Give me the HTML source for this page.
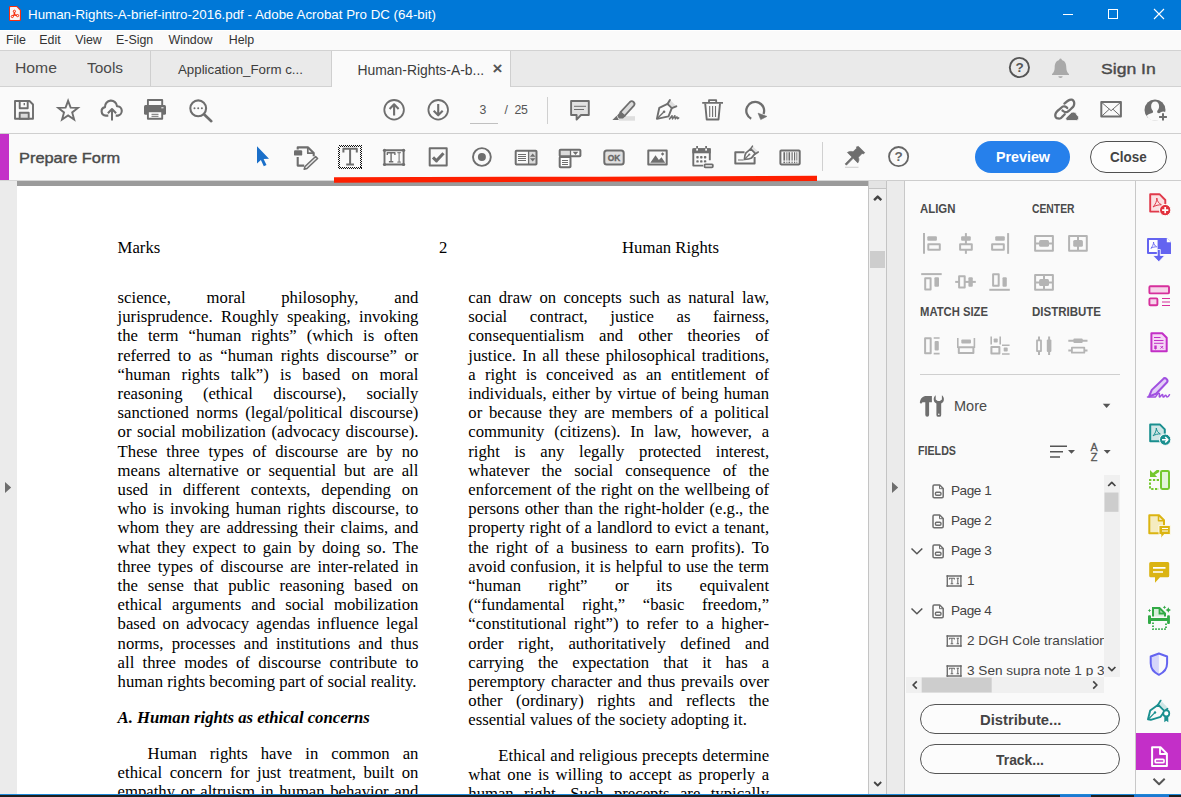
<!DOCTYPE html>
<html>
<head>
<meta charset="utf-8">
<title>Human-Rights-A-brief-intro-2016.pdf - Adobe Acrobat Pro DC (64-bit)</title>
<style>
*{box-sizing:border-box;margin:0;padding:0}
html,body{width:1181px;height:797px;overflow:hidden;background:#fff}
body{position:relative;font-family:"Liberation Sans",sans-serif;color:#4b4b4b}
.abs{position:absolute}
.t{position:absolute;white-space:nowrap;line-height:1;z-index:2}
svg{position:absolute;overflow:visible}
/* title bar */
#title{left:0;top:0;width:1181px;height:30px;background:#0078d7}
#menu{left:0;top:30px;width:1181px;height:20px;background:#fafafa;border-top:1px solid #fff}
#tabs{left:0;top:50px;width:1181px;height:37px;background:#eaeaea;border-top:1px solid #d2d2d2;border-bottom:1px solid #d2d2d2}
#tools{left:0;top:87px;width:1181px;height:47px;background:#fafafa;border-bottom:1px solid #cfcfcf}
#form{left:0;top:134px;width:1181px;height:47px;background:#fafafa}
#docbg{left:0;top:180px;width:905px;height:617px;background:#ebebeb;border-top:1px solid #d6d6d6}
#page{left:17px;top:186px;width:852px;height:611px;background:#fff}
#pshadow{left:17px;top:181px;width:852px;height:5.300px;background:#9b9b9b}
.doc{font-family:"Liberation Serif",serif;font-size:16.7px;color:#000}
.ln{position:absolute;white-space:nowrap;height:19.2px;line-height:19.2px;text-align:justify;text-align-last:justify}
.ln.l{text-align-last:left}
.ln.r{text-align-last:right}
.m{top:33px;font-size:12.4px;line-height:15px;color:#333;text-align:center}
.h{font-size:12px;line-height:14px;font-weight:bold;color:#4a4a4a;transform-origin:0 50%}
.f{font-size:13.6px;line-height:16px;color:#444}
.btn{width:200px;height:30px;border-radius:15px;border:1.300px solid #555;background:#fcfcfc}
.sb{-webkit-text-stroke:.4px currentColor}
</style>
</head>
<body>
<div id="title" class="abs"></div>
<div id="menu" class="abs"></div>
<div id="tabs" class="abs"></div>
<div id="tools" class="abs"></div>
<div id="form" class="abs"></div>
<div id="docbg" class="abs"></div>
<div id="pshadow" class="abs"></div>
<div id="page" class="abs"></div>
<div class="doc">
<div class="ln " style="left:117.6px;top:288.0px;width:300.8px">science, moral philosophy, and</div>
<div class="ln " style="left:117.6px;top:307.2px;width:300.8px">jurisprudence. Roughly speaking, invoking</div>
<div class="ln " style="left:117.6px;top:326.4px;width:300.8px">the term “human rights” (which is often</div>
<div class="ln " style="left:117.6px;top:345.6px;width:300.8px">referred to as “human rights discourse” or</div>
<div class="ln " style="left:117.6px;top:364.8px;width:300.8px">“human rights talk”) is based on moral</div>
<div class="ln " style="left:117.6px;top:384.0px;width:300.8px">reasoning (ethical discourse), socially</div>
<div class="ln " style="left:117.6px;top:403.2px;width:300.8px">sanctioned norms (legal/political discourse)</div>
<div class="ln " style="left:117.6px;top:422.4px;width:300.8px">or social mobilization (advocacy discourse).</div>
<div class="ln " style="left:117.6px;top:441.6px;width:300.8px">These three types of discourse are by no</div>
<div class="ln " style="left:117.6px;top:460.8px;width:300.8px">means alternative or sequential but are all</div>
<div class="ln " style="left:117.6px;top:480.0px;width:300.8px">used in different contexts, depending on</div>
<div class="ln " style="left:117.6px;top:499.2px;width:300.8px">who is invoking human rights discourse, to</div>
<div class="ln " style="left:117.6px;top:518.4px;width:300.8px">whom they are addressing their claims, and</div>
<div class="ln " style="left:117.6px;top:537.6px;width:300.8px">what they expect to gain by doing so. The</div>
<div class="ln " style="left:117.6px;top:556.8px;width:300.8px">three types of discourse are inter-related in</div>
<div class="ln " style="left:117.6px;top:576.0px;width:300.8px">the sense that public reasoning based on</div>
<div class="ln " style="left:117.6px;top:595.2px;width:300.8px">ethical arguments and social mobilization</div>
<div class="ln " style="left:117.6px;top:614.4px;width:300.8px">based on advocacy agendas influence legal</div>
<div class="ln " style="left:117.6px;top:633.6px;width:300.8px">norms, processes and institutions and thus</div>
<div class="ln " style="left:117.6px;top:652.8px;width:300.8px">all three modes of discourse contribute to</div>
<div class="ln l" style="left:117.6px;top:672.0px;width:300.8px">human rights becoming part of social reality.</div>
<div class="ln " style="left:468.3px;top:288.0px;width:300.8px">can draw on concepts such as natural law,</div>
<div class="ln " style="left:468.3px;top:307.2px;width:300.8px">social contract, justice as fairness,</div>
<div class="ln " style="left:468.3px;top:326.4px;width:300.8px">consequentialism and other theories of</div>
<div class="ln " style="left:468.3px;top:345.6px;width:300.8px">justice. In all these philosophical traditions,</div>
<div class="ln " style="left:468.3px;top:364.8px;width:300.8px">a right is conceived as an entitlement of</div>
<div class="ln " style="left:468.3px;top:384.0px;width:300.8px">individuals, either by virtue of being human</div>
<div class="ln " style="left:468.3px;top:403.2px;width:300.8px">or because they are members of a political</div>
<div class="ln " style="left:468.3px;top:422.4px;width:300.8px">community (citizens). In law, however, a</div>
<div class="ln " style="left:468.3px;top:441.6px;width:300.8px">right is any legally protected interest,</div>
<div class="ln " style="left:468.3px;top:460.8px;width:300.8px">whatever the social consequence of the</div>
<div class="ln " style="left:468.3px;top:480.0px;width:300.8px">enforcement of the right on the wellbeing of</div>
<div class="ln " style="left:468.3px;top:499.2px;width:300.8px">persons other than the right-holder (e.g., the</div>
<div class="ln " style="left:468.3px;top:518.4px;width:300.8px">property right of a landlord to evict a tenant,</div>
<div class="ln " style="left:468.3px;top:537.6px;width:300.8px">the right of a business to earn profits). To</div>
<div class="ln " style="left:468.3px;top:556.8px;width:300.8px">avoid confusion, it is helpful to use the term</div>
<div class="ln " style="left:468.3px;top:576.0px;width:300.8px">“human right” or its equivalent</div>
<div class="ln " style="left:468.3px;top:595.2px;width:300.8px">(“fundamental right,” “basic freedom,”</div>
<div class="ln " style="left:468.3px;top:614.4px;width:300.8px">“constitutional right”) to refer to a higher-</div>
<div class="ln " style="left:468.3px;top:633.6px;width:300.8px">order right, authoritatively defined and</div>
<div class="ln " style="left:468.3px;top:652.8px;width:300.8px">carrying the expectation that it has a</div>
<div class="ln " style="left:468.3px;top:672.0px;width:300.8px">peremptory character and thus prevails over</div>
<div class="ln " style="left:468.3px;top:691.2px;width:300.8px">other (ordinary) rights and reflects the</div>
<div class="ln l" style="left:468.3px;top:710.4px;width:300.8px">essential values of the society adopting it.</div>
<div class="ln l" style="left:117.6px;top:238.4px;width:60px">Marks</div>
<div class="ln l" style="left:439px;top:238.4px;width:20px">2</div>
<div class="ln l" style="left:622px;top:238.4px;width:120px">Human Rights</div>
<div class="ln l" style="left:117.6px;top:708.0px;width:300.8px"><b><i>A. Human rights as ethical concerns</i></b></div>
<div class="ln " style="left:147.6px;top:744.0px;width:270.8px">Human rights have in common an</div>
<div class="ln " style="left:117.6px;top:763.2px;width:300.8px">ethical concern for just treatment, built on</div>
<div class="ln " style="left:117.6px;top:782.4px;width:300.8px">empathy or altruism in human behavior and</div>
<div class="ln " style="left:498.3px;top:746.0px;width:270.8px">Ethical and religious precepts determine</div>
<div class="ln " style="left:468.3px;top:765.2px;width:300.8px">what one is willing to accept as properly a</div>
<div class="ln " style="left:468.3px;top:784.4px;width:300.8px">human right. Such precepts are typically</div>
</div>
<!--UI-->
<!-- title bar text -->
<div class="t" id="ttl" style="left:28px;top:7.500px;font-size:12.600px;color:#fff;line-height:15px;transform:scaleX(1.0595);transform-origin:0 50%">Human-Rights-A-brief-intro-2016.pdf - Adobe Acrobat Pro DC (64-bit)</div>
<!-- menu bar -->
<div class="t m" style="left:6px;width:19px">File</div>
<div class="t m" style="left:39px;width:22px">Edit</div>
<div class="t m" style="left:75px;width:27px">View</div>
<div class="t m" style="left:116px;width:37px">E-Sign</div>
<div class="t m" style="left:167px;width:47px">Window</div>
<div class="t m" style="left:228px;width:27px">Help</div>
<!-- tab bar -->
<div class="abs" style="left:150px;top:51px;width:1px;height:35px;background:#cfcfcf"></div>
<div class="abs" id="atab" style="left:331px;top:51px;width:180px;height:36px;background:#fafafa;border-left:1px solid #cfcfcf;border-right:1px solid #cfcfcf"></div>
<div class="t" style="left:15px;top:59.300px;font-size:14.500px;line-height:18px;color:#4a4a4a;transform:scaleX(1.085);transform-origin:0 50%">Home</div>
<div class="t" style="left:87px;top:59.300px;font-size:14.500px;line-height:18px;color:#4a4a4a;transform:scaleX(1.065);transform-origin:0 50%">Tools</div>
<div class="t" style="left:178px;top:62px;font-size:13.3px;line-height:16px;color:#3c3c3c">Application_Form c...</div>
<div class="t" style="left:357.5px;top:62px;font-size:13.9px;line-height:16px;color:#3c3c3c">Human-Rights-A-b...</div>
<div class="t sb" style="left:1101.300px;top:58.500px;font-size:15.500px;line-height:20px;color:#4a4a4a;transform:scaleX(1.135);transform-origin:0 50%">Sign In</div>
<!-- toolbar text -->
<div class="t" style="left:479.600px;top:102.500px;font-size:12.300px;line-height:14px;color:#555">3</div>
<div class="abs" style="left:470px;top:123px;width:28px;height:1px;background:#c0c0c0"></div>
<div class="t" style="left:504.500px;top:102.500px;font-size:12.300px;line-height:14px;color:#555">/</div><div class="t" style="left:514.500px;top:102.500px;font-size:12.300px;line-height:14px;color:#555;letter-spacing:-.4px">25</div>
<div class="abs" style="left:547px;top:96.500px;width:1px;height:27px;background:#d0d0d0"></div>
<!-- prepare form bar -->
<div class="abs" style="left:0;top:134px;width:9px;height:46px;background:#c431c8"></div>
<div class="t sb" id="pf" style="left:19px;top:148.500px;font-size:15px;line-height:18px;color:#4a4a4a;transform:scaleX(1.092);transform-origin:0 50%">Prepare Form</div>
<div class="abs" style="left:822px;top:142px;width:1px;height:29px;background:#d0d0d0"></div>
<div class="abs" style="left:975px;top:141px;width:95px;height:32px;border-radius:16px;background:#2680eb"></div>
<div class="t" style="left:995.500px;top:148.500px;font-size:14.800px;line-height:17px;color:#fff;font-weight:bold;transform:scaleX(.965);transform-origin:0 50%">Preview</div>
<div class="abs" style="left:1090px;top:141px;width:77px;height:32px;border-radius:16px;border:1.300px solid #505050;background:#fdfdfd"></div>
<div class="t" style="left:1110.300px;top:148.500px;font-size:14.800px;line-height:17px;color:#444;font-weight:bold;transform:scaleX(.91);transform-origin:0 50%">Close</div>
<!-- doc scrollbar -->
<div class="abs" style="left:868px;top:181px;width:19px;height:616px;background:#f0f0f0;border-left:1px solid #c4c4c4;border-right:1px solid #c4c4c4"></div>
<div class="abs" style="left:869px;top:181px;width:17px;height:8px;background:#e4e4e4;border-bottom:1px solid #c4c4c4"></div>
<div class="abs" style="left:870px;top:251px;width:15px;height:17px;background:#cdcdcd"></div>
<div class="abs" style="left:887px;top:181px;width:18px;height:616px;background:#ebebeb;border-right:1px solid #c8c8c8"></div>
<div class="t" style="left:1015.400px;top:60.200px;width:8px;text-align:center;font-size:13.500px;line-height:15px;font-weight:bold;color:#555">?</div>
<div class="t" style="left:606px;top:153.800px;width:16px;text-align:center;font-size:8.400px;line-height:9px;font-weight:bold;color:#666;-webkit-text-stroke:.35px #666">OK</div>
<div class="t" style="left:894.600px;top:149.200px;width:8px;text-align:center;font-size:13.500px;line-height:15px;font-weight:bold;color:#666">?</div>
<div class="t" style="left:492.500px;top:59.200px;font-size:17px;line-height:20px;font-weight:bold;color:#555">×</div>
<!-- right panel -->
<div class="abs" id="rp" style="left:905px;top:181px;width:231px;height:616px;background:#fafafa"></div>
<div class="abs" id="rs" style="left:1135px;top:181px;width:46px;height:616px;background:#fafafa;border-left:1px solid #c8c8c8"></div>
<div class="abs" style="left:887px;top:180px;width:294px;height:1px;background:#cdcdcd"></div>
<div class="t h" style="left:920px;top:202px;transform:scaleX(.95)">ALIGN</div>
<div class="t h" style="left:1032px;top:202px;transform:scaleX(.862)">CENTER</div>
<div class="t h" style="left:920px;top:305px;transform:scaleX(.938)">MATCH SIZE</div>
<div class="t h" style="left:1032px;top:305px;transform:scaleX(.958)">DISTRIBUTE</div>
<div class="abs" style="left:920px;top:374px;width:200px;height:1px;background:#cfcfcf"></div>
<div class="t" style="left:954px;top:398px;font-size:14.5px;line-height:17px;color:#4a4a4a">More</div>
<div class="t h" style="left:918px;top:444px;transform:scaleX(.89)">FIELDS</div>
<div class="t" style="left:1090px;top:442px;width:8px;text-align:center;font-size:10.800px;line-height:10px;color:#555;-webkit-text-stroke:.3px #555">A</div>
<div class="t" style="left:1090px;top:451.700px;width:8px;text-align:center;font-size:10.800px;line-height:10px;color:#555;-webkit-text-stroke:.3px #555">Z</div>
<!-- fields list -->
<div class="abs" id="fl" style="left:910px;top:476px;width:194px;height:200px;overflow:hidden">
<div class="t f" style="left:41px;top:7px;letter-spacing:-.45px">Page 1</div>
<div class="t f" style="left:41px;top:37px;letter-spacing:-.45px">Page 2</div>
<div class="t f" style="left:41px;top:67px;letter-spacing:-.45px">Page 3</div>
<div class="t f" style="left:57px;top:97px">1</div>
<div class="t f" style="left:41px;top:127px;letter-spacing:-.45px">Page 4</div>
<div class="t f" style="left:57px;top:157px">2 DGH Cole translation</div>
<div class="t f" style="left:57px;top:187px">3 Sen supra note 1 p 35</div>
</div>
<div class="abs btn" style="left:920px;top:704px"></div>
<div class="t" style="left:979.500px;top:710.500px;font-size:15.200px;line-height:17px;color:#444;font-weight:bold;transform:scaleX(.975);transform-origin:0 50%">Distribute...</div>
<div class="abs btn" style="left:920px;top:744px"></div>
<div class="t" style="left:996.300px;top:750.500px;font-size:15.200px;line-height:17px;color:#444;font-weight:bold;transform:scaleX(.915);transform-origin:0 50%">Track...</div>
<!-- bottom strip -->
<div class="abs" style="left:0;top:793.500px;width:1181px;height:3.500px;background:#1e1e1e;border-top:1.500px solid #1e88d8"></div>
<div class="abs" style="left:1060px;top:795px;width:31px;height:2px;background:#1e78d0"></div><div class="abs" style="left:1134px;top:795px;width:35px;height:2px;background:#1e78d0"></div>
<svg id="ic" width="1181" height="797" viewBox="0 0 1181 797" style="left:0;top:0" fill="none" stroke="#6e6e6e" stroke-width="2" stroke-linejoin="round" stroke-linecap="butt">
<!-- title icon -->
<g stroke="none">
<path d="M10.300 6h6.700l4 4v9.700a1.300 1.300 0 0 1-1.300 1.300h-9.400a1.300 1.300 0 0 1-1.300-1.300v-12.400a1.300 1.300 0 0 1 1.300-1.300z" fill="#f62e0e"/>
<path d="M10.600 7.100h6l3.300 3.300v8.900a.6.600 0 0 1-.6.600h-8.700a.6.600 0 0 1-.6-.6v-11.600a.6.600 0 0 1 .6-.6z" fill="#fbf6f6"/>
</g>
<g stroke="#f62e0e" stroke-width="1" fill="none">
<path d="M14.400 12.300v2.400M14.400 14.700l-1.600 1.300M14.400 14.700l2.400.8" stroke-width="1.600"/>
<circle cx="14.400" cy="11.300" r="1.100"/><circle cx="12.300" cy="16.500" r="1.100"/><circle cx="17.600" cy="15.600" r="1.100"/>
</g>
<!-- window controls -->
<g stroke="#fff" stroke-width="1" fill="none" shape-rendering="crispEdges">
<path d="M1063 14.500h10"/>
<rect x="1108.500" y="9.500" width="9" height="9"/>
</g>
<path d="M1154 9l10 10M1164 9l-10 10" stroke="#fff" stroke-width="1.100"/>
<!-- save -->
<path d="M15 101h14.500l3.500 3.500v14.200h-18z" stroke-width="1.900"/>
<path d="M19.700 101v7.300h8v-7.300" stroke-width="1.900"/>
<path d="M24.300 103v2.300" stroke-width="1.400"/>
<rect x="19.700" y="112.700" width="9" height="6" fill="#dadada" stroke-width="1.900"/>
<!-- star -->
<path d="M68.10 100.80 L70.63 107.62 L77.90 107.92 L72.19 112.43 L74.15 119.43 L68.10 115.40 L62.05 119.43 L64.01 112.43 L58.30 107.92 L65.57 107.62z" stroke-width="1.900" stroke-linejoin="miter"/>
<!-- cloud upload -->
<path d="M108.300 115.600H105.800A4.300 4.300 0 0 1 105 107.100A6 6 0 0 1 117 106.200A4.750 4.750 0 0 1 118 115.600H115.700" stroke-width="2.100"/>
<path d="M112 120.600v-11M107.900 113.300l4.100-4.300 4.100 4.300" stroke-width="2"/>
<!-- printer -->
<path d="M147.900 105v-5h14.300v5" stroke-width="1.900"/>
<rect x="144" y="105" width="22" height="9.700" rx="1.500" fill="#6e6e6e" stroke="none"/>
<rect x="147.900" y="111.300" width="14.300" height="7.500" fill="#fff" stroke-width="1.900"/>
<path d="M151.500 114.300h7M151.500 116.300h7" stroke-width="1"/>
<rect x="161.300" y="107.300" width="2.200" height="1" fill="#fff" stroke="none"/>
<!-- search -->
<circle cx="198.200" cy="108.300" r="7.900" stroke-width="2.100"/>
<path d="M204 114.200l7.300 7" stroke-width="2.600" stroke-linecap="round"/>
<g fill="#6e6e6e" stroke="none"><circle cx="194.500" cy="108.300" r="1"/><circle cx="198.200" cy="108.300" r="1"/><circle cx="201.900" cy="108.300" r="1"/></g>
<!-- page up/down -->
<circle cx="394.100" cy="109.800" r="9.800" stroke-width="1.800"/>
<path d="M394.100 115.600v-11M389.600 108.900l4.500-4.600 4.500 4.600" stroke-width="2.100"/>
<circle cx="438.200" cy="109.800" r="9.800" stroke-width="1.800"/>
<path d="M438.200 104v11M433.700 110.700l4.500 4.600 4.500-4.600" stroke-width="2.100"/>
<!-- comment -->
<path d="M571.100 101h17.700v14h-7.800l-4.400 4.600v-4.600h-5.500z" fill="#e2e2e2" stroke-width="1.900"/>
<path d="M574 106.300h12M574 109.500h10" stroke-width="1"/>
<!-- highlighter -->
<rect x="619" y="116.200" width="16" height="4.500" fill="#dedede" stroke="none"/>
<path d="M620.300 112.300l9.600-10.300a2.700 2.700 0 0 1 4 3.600l-9.400 10.400z" fill="#dcdcdc" stroke-width="1.800"/>
<path d="M620.600 111.400l5 4.500-2.600 2.600h-4.200l-1.700-2.900z" fill="#6e6e6e" stroke="none"/>
<path d="M612.400 120l4.200-4.300 2.200 4.300z" fill="#6e6e6e" stroke="none"/>
<!-- sign pen -->
<path d="M668 103.500l4.200 4.400 4-1.800-6-6.200z" fill="#dedede" stroke="none"/>
<path d="M656.900 118.900l2.400-11.100 8.200-3.900 4.300 4.200-3.300 8.300z" stroke-width="1.900"/>
<path d="M657.300 118.500l6.500-6.500" stroke-width="1.300"/><circle cx="664.100" cy="111.700" r="1.300" fill="#6e6e6e" stroke="none"/>
<path d="M667.500 103.900l2.400-3.900M671.800 108.100l4.500-1.700" stroke-width="2" stroke-linecap="round"/>
<path d="M669.500 119l2.500-3.300.5 3.200 2.300-3.200.5 3.200 1.600-2 .8 1.800 1-.8" stroke-width="1.500" stroke-linecap="round"/>
<!-- trash -->
<path d="M702.200 102.800h20.800M709 102.500v-2.300h7.200v2.300" stroke-width="1.800"/>
<path d="M705.200 103.500l1.500 16h11.800l1.500-16" stroke-width="1.900"/>
<path d="M709.700 106v11M712.600 106v11M715.500 106v11" stroke-width="1.100"/>
<!-- rotate -->
<path d="M751.200 118.700a8.900 8.900 0 1 1 12.300-4.700" stroke-width="2.300"/>
<path d="M758.100 113.200l8.800 3.200-6.200 3.200z" fill="#6e6e6e" stroke="#6e6e6e" stroke-width=".6"/>
<!-- link -->
<g stroke-width="2.300" stroke-linecap="round">
<path d="M1064.40 103.55C1064.87 103.17 1066.33 101.88 1067.21 101.27C1068.09 100.65 1068.91 100.13 1069.67 99.86C1070.43 99.60 1071.16 99.54 1071.78 99.69C1072.39 99.83 1072.95 100.19 1073.36 100.74C1073.77 101.30 1074.21 102.12 1074.24 103.02C1074.27 103.93 1074.00 105.28 1073.53 106.19C1073.07 107.09 1072.07 107.83 1071.43 108.47C1070.78 109.11 1070.37 109.46 1069.67 110.05C1068.97 110.64 1068.03 111.66 1067.21 111.98C1066.39 112.30 1065.54 112.22 1064.75 111.98C1063.96 111.75 1062.85 110.81 1062.47 110.58"/>
<path d="M1067.21 107.94C1066.92 107.71 1066.16 106.77 1065.45 106.54C1064.75 106.30 1063.82 106.24 1063.00 106.54C1062.18 106.83 1061.36 107.65 1060.54 108.29C1059.72 108.94 1058.84 109.64 1058.08 110.40C1057.32 111.16 1056.44 112.07 1055.97 112.86C1055.50 113.65 1055.27 114.38 1055.27 115.14C1055.27 115.90 1055.50 116.87 1055.97 117.43C1056.44 117.98 1057.32 118.33 1058.08 118.48C1058.84 118.63 1059.78 118.66 1060.54 118.30C1061.30 117.95 1061.94 117.05 1062.64 116.37C1063.35 115.70 1064.40 114.62 1064.75 114.26"/>
</g>
<path d="M1067.300 120.500A1.800 1.800 0 0 1 1066.300 117.400L1070 113.800A3.800 3.800 0 0 1 1077 115.300A2.700 2.700 0 0 1 1076.400 120.500z" fill="#6e6e6e" stroke="#fafafa" stroke-width=".8"/>
<!-- mail -->
<rect x="1101.300" y="102.100" width="19.600" height="14.400" stroke-width="2"/>
<path d="M1101.300 102.100l9.800 8.600 9.800-8.600M1101.300 116.500l8-7.300M1120.900 116.500l-8-7.300" stroke-width="1"/>
<!-- user -->
<circle cx="1155" cy="109.900" r="10.500" fill="#6e6e6e" stroke="none"/>
<path d="M1155.100 101.600c2.400 0 4 2 4 4.700 0 1.900-.8 3.600-1.900 4.600v1.600c1.800 1 4.600 1.400 6.300 3.300a9.500 9.500 0 0 1-16.800 0c1.700-1.900 4.500-2.300 6.300-3.300v-1.600c-1.100-1-1.900-2.700-1.900-4.600 0-2.700 1.600-4.700 4-4.700z" fill="#fafafa" stroke="none"/>
<circle cx="1163.200" cy="117" r="5.400" fill="#fafafa" stroke="none"/>
<path d="M1163 113.200v7.400M1159.100 116.900h7.800" stroke-width="2"/>
<!-- help (tab bar) -->
<circle cx="1019.400" cy="67.500" r="9.600" stroke-width="1.900" stroke="#555"/>
<!-- bell -->
<path d="M1060.500 58.500a1.300 1.300 0 0 1 1.300 1.500c3.300.9 4.500 3.800 4.500 7.500 0 3.600 1.200 5.200 2.700 6.500v1h-17v-1c1.500-1.300 2.700-2.900 2.700-6.500 0-3.700 1.200-6.600 4.500-7.500a1.300 1.300 0 0 1 1.300-1.500zM1058.300 76.200h4.400a2.200 1.800 0 0 1-4.400 0z" fill="#a9a9a9" stroke="none"/>
<!-- select arrow -->
<path d="M257 146.300v17.200l3.900-3.500 2.900 6.300 2.700-1.300-2.900-6.100 5.400-.2z" fill="#1a6fc9" stroke="none"/>
<!-- edit doc -->
<path d="M297.700 149.500v-2.100h10.400l5.600 5.700v3.200M297.700 157v8.600h6.500" stroke-width="2.100"/>
<path d="M307.800 147.400v5.800h5.800" stroke-width="1.700"/>
<rect x="294" y="150.200" width="8.200" height="5.400" rx="1.200" fill="#6e6e6e" stroke="none"/>
<path d="M315.600 156.500l2 2-10.600 10-2.800.8.800-2.800z" fill="#e8e8e8" stroke-width="1.500"/>
<!-- text field (selected) -->
<rect x="338.500" y="145.500" width="23" height="23" stroke="#111" stroke-width="1" stroke-dasharray="1 1" shape-rendering="crispEdges" stroke-linejoin="miter"/><rect x="339.500" y="146.500" width="21" height="21" stroke="#111" stroke-width="1" stroke-dasharray="1 1" shape-rendering="crispEdges" stroke-linejoin="miter"/>
<path d="M343.400 152.600v-3.800h13.400v3.800M350.100 148.800v15.600M346.200 164.400h7.800" stroke-width="2"/>
<!-- TI field -->
<rect x="384.500" y="150.300" width="19.100" height="14.200" stroke-width="1.900"/>
<g fill="#6e6e6e" stroke="none"><circle cx="384.500" cy="150.300" r="1.600"/><circle cx="403.600" cy="150.300" r="1.600"/><circle cx="384.500" cy="164.500" r="1.600"/><circle cx="403.600" cy="164.500" r="1.600"/></g>
<path d="M387.300 155v-2.200h7.600v2.200M391.100 152.800v9M388.900 161.800h4.400" stroke-width="1.400"/>
<path d="M397.300 152.700h3.600M399.100 152.700v9.400M397.300 162.100h3.600" stroke-width="1"/>
<!-- checkbox -->
<rect x="429.700" y="148.300" width="17" height="17.200" stroke-width="2"/>
<path d="M433 157.300l3.500 3.500 7-7.500" stroke-width="3.100"/>
<!-- radio -->
<circle cx="481.900" cy="157" r="8.900" stroke-width="1.900"/>
<circle cx="481.900" cy="157" r="4" fill="#6e6e6e" stroke="none"/>
<!-- list box -->
<rect x="528.600" y="150.700" width="8" height="13.800" fill="#dcdcdc" stroke="none"/>
<rect x="515.700" y="150.700" width="20.800" height="13.800" rx=".8" stroke-width="2"/>
<path d="M528.600 150.700v13.800" stroke-width="1.300"/>
<path d="M518 154.500h8M518 156.500h8M518 158.500h8M518 160.500h8" stroke-width="1" shape-rendering="crispEdges"/>
<path d="M529.900 156.700l2.800-3.300 2.800 3.300zM529.900 158.300l2.800 3.300 2.800-3.300z" fill="#6e6e6e" stroke="none"/>
<!-- dropdown -->
<rect x="559.700" y="149.700" width="10.800" height="6.600" fill="#dcdcdc" stroke="none"/>
<rect x="559.700" y="149.700" width="20.700" height="6.600" rx=".8" stroke-width="2"/>
<rect x="559.700" y="157" width="10.800" height="10.300" rx=".8" stroke-width="2" fill="#fff"/>
<path d="M570.500 149.700v6.600" stroke-width="1.300"/>
<path d="M572.700 151.700l2.800 3.200 2.800-3.200z" fill="#6e6e6e" stroke="none"/>
<path d="M562.300 160.500h5.400M562.300 162.500h5.400M562.300 164.500h5.400" stroke-width="1" shape-rendering="crispEdges"/>
<!-- OK button -->
<rect x="604.300" y="150.500" width="19.400" height="14.100" rx="2.500" fill="#e0e0e0" stroke-width="2"/>
<!-- image -->
<rect x="648.300" y="150.500" width="18.400" height="14.100" stroke-width="2"/>
<path d="M650.300 162.700l5.200-7.400 3.400 4.600 2.600-2.600 3.700 5.400z" fill="#6e6e6e" stroke="none"/>
<path d="M662.600 152.300l1.700 1.700-1.700 1.700-1.700-1.700z" fill="#6e6e6e" stroke="none"/>
<!-- calendar -->
<path d="M693.300 149.200h16.500v11M704 165.600h-10.700v-16.400" stroke-width="1.900"/>
<rect x="692.400" y="148.300" width="18.300" height="5" fill="#6e6e6e" stroke="none"/>
<rect x="696.200" y="146" width="1.800" height="2.600" fill="#6e6e6e" stroke="none"/><rect x="705.200" y="146" width="1.800" height="2.600" fill="#6e6e6e" stroke="none"/>
<rect x="696.200" y="148.600" width="1.800" height="2" fill="#fafafa" stroke="none"/><rect x="705.200" y="148.600" width="1.800" height="2" fill="#fafafa" stroke="none"/>
<g fill="#6e6e6e" stroke="none"><rect x="696.300" y="156" width="2.400" height="2.400" rx=".7"/><rect x="700.100" y="156" width="2.400" height="2.400" rx=".7"/><rect x="703.900" y="156" width="2.400" height="2.400" rx=".7"/><rect x="696.300" y="160.200" width="2.400" height="2.400" rx=".7"/><rect x="700.100" y="160.200" width="2.400" height="2.400" rx=".7"/><rect x="703.900" y="160.200" width="2.400" height="2.400" rx=".7"/></g>
<rect x="703" y="162.800" width="11.300" height="6.100" rx="1.500" fill="#fafafa" stroke="none"/>
<rect x="704.500" y="164.300" width="8.300" height="3.100" rx=".8" fill="#fff" stroke-width="1.800"/>
<!-- signature field -->
<path d="M744.500 152.200h-9.200v11.400h19.300v-6.600" stroke-width="2"/>
<path d="M738 160h5.600" stroke-width="1"/>
<path d="M750.600 148.600l1.900-2.700 5.300 5.300-2.700 1.900" fill="#e2e2e2" stroke="none"/>
<path d="M744.400 159.400c.2-3 .6-5 1.600-6.600l4.700-3.900 4.500 4.500-3.800 4.700c-1.700 1-3.800 1.300-7 1.300z" fill="#fafafa" stroke-width="1.700"/>
<path d="M750.400 149.200l2.100-3.100M755.200 154l3.100-2" stroke-width="1.500" stroke-linecap="round"/>
<path d="M744.800 159l4-4" stroke-width="1.100"/><circle cx="749.300" cy="154.500" r="1.100" fill="#6e6e6e" stroke="none"/>
<!-- barcode -->
<rect x="780.400" y="150.400" width="19.300" height="14" rx=".8" stroke-width="2"/>
<g fill="#6e6e6e" stroke="none"><rect x="783.4" y="152.200" width="1.7" height="8.400"/><rect x="783.4" y="161.600" width="1.7" height="1.500"/><rect x="786.4" y="152.200" width="1.0" height="8.400"/><rect x="786.4" y="161.600" width="1.0" height="1.500"/><rect x="788.5" y="152.200" width="1.6" height="8.400"/><rect x="788.5" y="161.600" width="1.6" height="1.500"/><rect x="791.5" y="152.200" width="1.2" height="8.400"/><rect x="791.5" y="161.600" width="1.2" height="1.500"/><rect x="794.0" y="152.200" width="1.2" height="8.400"/><rect x="794.0" y="161.600" width="1.2" height="1.500"/><rect x="796.4" y="152.200" width="0.9" height="8.400"/><rect x="796.4" y="161.600" width="0.9" height="1.500"/></g>
<!-- pin -->
<path d="M858.500 146.400l6.300 6.300-1.600 1.200-1.100-.5-3.700 3.900c.8 1.900.6 3.900-.6 5.600l-4.600-4.600-6.800 6.900-1.300-1.300 6.800-6.900-4.500-4.500c1.700-1.200 3.700-1.400 5.600-.7l3.900-3.800-.5-1.100z" fill="#6e6e6e" stroke="#6e6e6e" stroke-width=".7"/>
<rect x="845" y="166.700" width="13.500" height="1.300" fill="#d8d8d8" stroke="none"/>
<!-- help -->
<circle cx="898.600" cy="156.600" r="9.600" stroke-width="1.800" stroke="#666"/>
<!-- red annotation line -->
<path d="M334 177.200L600 176.700 817 175.700V181L600 181.600 334 182.700z" fill="#fe1f00" stroke="none"/>
<!-- ===== right panel: align icons ===== -->
<g stroke="#b4b4b4" stroke-width="2" fill="none">
<!-- align left -->
<path d="M924 233.100v20.700"/>
<rect x="927.300" y="236.200" width="9.600" height="4.600" rx="1" fill="#b4b4b4" stroke="none"/>
<rect x="928.300" y="244.300" width="11.500" height="5.400"/>
<!-- align center -->
<path d="M965.900 233.100v20.700"/>
<rect x="961.100" y="236.200" width="9.700" height="4.600" rx="1" fill="#b4b4b4" stroke="none"/>
<rect x="960.100" y="244.300" width="11.700" height="5.400" fill="#fafafa"/>
<!-- align right -->
<path d="M1008.100 233.100v20.700"/>
<rect x="995.200" y="236.200" width="9.600" height="4.600" rx="1" fill="#b4b4b4" stroke="none"/>
<rect x="992.100" y="244.300" width="11.700" height="5.400"/>
<!-- align top -->
<path d="M921.200 274.100h20.500"/>
<rect x="925.200" y="278.300" width="5.400" height="11.200"/>
<rect x="934.400" y="277.300" width="4.600" height="9.400" rx="1" fill="#b4b4b4" stroke="none"/>
<!-- align middle -->
<path d="M955.200 281.900h20.600"/>
<rect x="959.100" y="276.300" width="5.600" height="11.200" fill="#fafafa"/>
<rect x="968.400" y="277.300" width="4.400" height="9.400" rx="1" fill="#b4b4b4" stroke="none"/>
<!-- align bottom -->
<path d="M989.300 289.800h20.500"/>
<rect x="993.100" y="274.300" width="5.600" height="11.400"/>
<rect x="1002.500" y="277.300" width="4.300" height="9.400" rx="1" fill="#b4b4b4" stroke="none"/>
<!-- center v -->
<rect x="1035.100" y="236.100" width="17.800" height="14.700"/>
<path d="M1035.100 243.500h17.800"/>
<rect x="1039.100" y="240" width="9.900" height="6.800" rx="1.500" fill="#b4b4b4" stroke="none"/>
<!-- center h -->
<rect x="1069.100" y="236.100" width="17.700" height="14.700"/>
<path d="M1078 236.100v14.700"/>
<rect x="1073.200" y="240" width="9.700" height="6.800" rx="1.500" fill="#b4b4b4" stroke="none"/>
<!-- center both -->
<rect x="1035.100" y="275.100" width="17.800" height="14.600"/>
<path d="M1035.100 282.500h17.800M1044 275.100v14.600"/>
<rect x="1039.100" y="279.100" width="9.900" height="6.800" rx="1.500" fill="#b4b4b4" stroke="none"/>
<!-- match height -->
<rect x="925.100" y="338.200" width="5.600" height="15.100"/>
<path d="M933.700 338h5.900M933.700 353.600h5.900" stroke-width="1.600"/>
<rect x="934.600" y="341.100" width="4.200" height="9.300" rx="1" fill="#b4b4b4" stroke="none"/>
<!-- match width -->
<path d="M957.800 338v10M974.400 338v10" stroke-width="1.600"/>
<rect x="961.300" y="339.400" width="9.700" height="4.200" rx="1" fill="#b4b4b4" stroke="none"/>
<rect x="958.800" y="347.200" width="14.600" height="5.800"/>
<!-- match both -->
<path d="M991.200 336.500v8M1000.200 336.500v8" stroke-width="1.600"/>
<rect x="993.700" y="338.500" width="4" height="4" rx=".8" fill="#b4b4b4" stroke="none"/>
<rect x="991.400" y="347" width="8" height="6.600"/>
<path d="M1002 345.300h7.600M1002 354h7.600" stroke-width="1.600"/>
<rect x="1003.700" y="347.600" width="4" height="4" rx=".8" fill="#b4b4b4" stroke="none"/>
<!-- distribute h -->
<path d="M1039 336.500v18.500M1049.100 336.500v18.500"/>
<rect x="1037" y="340.400" width="4" height="10.700" fill="#fafafa" stroke-width="1.800"/>
<rect x="1046.800" y="339.400" width="4.600" height="12.700" rx="1" fill="#b4b4b4" stroke="none"/>
<!-- distribute v -->
<path d="M1068.300 340.700h19.200M1068.300 350.400h19.200"/>
<rect x="1073.400" y="338.500" width="9.300" height="4.500" rx="1" fill="#b4b4b4" stroke="none"/>
<rect x="1071.900" y="347.700" width="12.400" height="5" fill="#fafafa" stroke-width="1.800"/>
</g>
<!-- tools (hammer + wrench) -->
<g fill="#6e6e6e" stroke="none">
<path d="M919.800 402.500c.6-4 3-6.400 6.500-6.400h5.600v6.200h-2.800v12.500a1.900 1.900 0 0 1-3.800 0v-12.500h-1.800c-1.300 0-2 .7-2.400 1.600z"/>
<path d="M935.700 395.300v4.200l2 1.400h2.200l2-1.400v-4.200c1.200.8 2 2.300 2 4 0 2-1.100 3.600-2.700 4.300v11.300a1.900 1.900 0 0 1-1.900 1.900h-1a1.900 1.900 0 0 1-1.900-1.900v-11.300c-1.600-.7-2.700-2.300-2.700-4.300 0-1.700.8-3.200 2-4z"/>
</g>
<circle cx="938.800" cy="414.300" r=".8" fill="#fafafa" stroke="none"/>
<path d="M1102.800 403.800h7.600l-3.800 4.300z" fill="#555" stroke="none"/>
<!-- sort icons -->
<path d="M1050 446.200h17M1050 451.700h13M1050 456.900h10" stroke="#555" stroke-width="1.500"/>
<path d="M1068 450h7l-3.500 3.800zM1103.700 450h7l-3.500 3.800z" fill="#555" stroke="none"/>
<!-- list scrollbars -->
<g stroke="none">
<rect x="1104" y="475" width="16" height="202" fill="#f0f0f0"/>
<rect x="1104.500" y="492.500" width="14" height="19.300" fill="#cdcdcd"/>
<rect x="906" y="677" width="198" height="16" fill="#f0f0f0"/>
<rect x="921.700" y="677.500" width="70" height="15" fill="#cdcdcd"/>
</g>
<g stroke="#444" stroke-width="1.700" fill="none">
<path d="M1108.200 486l3.600-3.700 3.600 3.700M1108.200 667l3.600 3.700 3.600-3.700"/>
<path d="M916.800 681.300l-3.700 3.700 3.700 3.700M1093.200 681.300l3.700 3.700-3.700 3.700"/>
<!-- doc scrollbar arrows -->
<path d="M874.100 200.200l3.600-3.600 3.600 3.600" stroke-width="2.400"/>
<path d="M874.200 782l3.500 3.500 3.500-3.500" stroke-width="1.800"/>
</g>
<!-- splitter triangles -->
<path d="M5 482v11l6.200-5.500zM892 482v11l6.200-5.500z" fill="#6e6e6e" stroke="none"/>
<!-- tree chevrons -->
<path d="M911.500 548.500l5.400 5.300 5.400-5.300M911.500 608.500l5.400 5.300 5.400-5.300" stroke="#555" stroke-width="1.500"/>
<!-- tree icons -->
<g stroke="#6e6e6e" fill="none">
<path d="M934.200 485.0h5.500l3.500 3.500v8a1.200 1.200 0 0 1-1.200 1.200h-7.800a1.200 1.200 0 0 1-1.200-1.200v-10.300a1.200 1.200 0 0 1 1.200-1.200z" stroke-width="1.500"/>
<path d="M939.500 485.0v3.700h3.700" stroke-width="1"/>
<rect x="935.400" y="492.3" width="5.600" height="3" rx="1.200" stroke-width="1.400"/>
<path d="M934.200 515.0h5.500l3.500 3.500v8a1.200 1.200 0 0 1-1.200 1.200h-7.800a1.200 1.200 0 0 1-1.200-1.200v-10.300a1.200 1.200 0 0 1 1.200-1.200z" stroke-width="1.500"/>
<path d="M939.500 515.0v3.700h3.700" stroke-width="1"/>
<rect x="935.400" y="522.3" width="5.600" height="3" rx="1.200" stroke-width="1.400"/>
<path d="M934.200 545.0h5.500l3.500 3.500v8a1.200 1.200 0 0 1-1.200 1.200h-7.800a1.200 1.200 0 0 1-1.200-1.200v-10.300a1.200 1.200 0 0 1 1.200-1.200z" stroke-width="1.500"/>
<path d="M939.500 545.0v3.700h3.700" stroke-width="1"/>
<rect x="935.400" y="552.3" width="5.600" height="3" rx="1.200" stroke-width="1.400"/>
<path d="M934.200 605.0h5.500l3.500 3.500v8a1.200 1.200 0 0 1-1.200 1.200h-7.800a1.200 1.200 0 0 1-1.200-1.200v-10.300a1.200 1.200 0 0 1 1.200-1.200z" stroke-width="1.500"/>
<path d="M939.500 605.0v3.700h3.700" stroke-width="1"/>
<rect x="935.400" y="612.3" width="5.600" height="3" rx="1.200" stroke-width="1.400"/>
<rect x="947.300" y="576.0" width="13.600" height="10" stroke-width="1.400"/>
<path d="M949.400 579.5v-1.300h5v1.300M951.900 578.2v5.600M950.600 583.8h2.600M956.600 578.2h2.400M957.800 578.2v5.600M956.600 583.8h2.400" stroke-width="1.100"/>
<circle cx="947.3" cy="576.0" r="1" fill="#6e6e6e" stroke="none"/>
<circle cx="947.3" cy="586.0" r="1" fill="#6e6e6e" stroke="none"/>
<circle cx="960.9" cy="576.0" r="1" fill="#6e6e6e" stroke="none"/>
<circle cx="960.9" cy="586.0" r="1" fill="#6e6e6e" stroke="none"/>
<rect x="947.300" y="636.0" width="13.600" height="10" stroke-width="1.400"/>
<path d="M949.400 639.5v-1.300h5v1.300M951.900 638.2v5.600M950.600 643.8h2.600M956.600 638.2h2.400M957.800 638.2v5.600M956.600 643.8h2.400" stroke-width="1.100"/>
<circle cx="947.3" cy="636.0" r="1" fill="#6e6e6e" stroke="none"/>
<circle cx="947.3" cy="646.0" r="1" fill="#6e6e6e" stroke="none"/>
<circle cx="960.9" cy="636.0" r="1" fill="#6e6e6e" stroke="none"/>
<circle cx="960.9" cy="646.0" r="1" fill="#6e6e6e" stroke="none"/>
<rect x="947.300" y="666.0" width="13.600" height="10" stroke-width="1.400"/>
<path d="M949.400 669.5v-1.300h5v1.300M951.900 668.2v5.600M950.600 673.8h2.600M956.600 668.2h2.400M957.800 668.2v5.600M956.600 673.8h2.400" stroke-width="1.100"/>
<circle cx="947.3" cy="666.0" r="1" fill="#6e6e6e" stroke="none"/>
<circle cx="947.3" cy="676.0" r="1" fill="#6e6e6e" stroke="none"/>
<circle cx="960.9" cy="666.0" r="1" fill="#6e6e6e" stroke="none"/>
<circle cx="960.9" cy="676.0" r="1" fill="#6e6e6e" stroke="none"/>
</g>
<!-- ===== right strip icons ===== -->
<!-- 1 create pdf -->
<path d="M1150.200 194.200h9.300l5.800 5.800v11.600h-15.100z" fill="#fbe1e3" stroke="#e0394a" stroke-width="1.900"/>
<path d="M1156.800 198c.3 2.800-1.400 6.600-3.800 9M1156.800 198c.2 3.200 2.300 5.600 4.600 6.800M1153 207c2.400-1.500 5.600-2.300 8.400-2.200" stroke="#e0394a" stroke-width="1"/>
<circle cx="1165.200" cy="210.100" r="5.700" fill="#e2303c" stroke="#fff" stroke-width="1"/>
<path d="M1165.200 207v6.200M1162.100 210.100h6.200" stroke="#fff" stroke-width="1.700"/>
<!-- 2 export pdf -->
<path d="M1158.500 238h8.300l4.200 4.200v11.800h-12.500z" fill="#6464f0" stroke="none"/>
<path d="M1166.800 238v4.200h4.200z" fill="#fff" stroke="none"/>
<rect x="1148" y="239" width="10.600" height="14" fill="#fff" stroke="#6464f0" stroke-width="2"/>
<path d="M1153.500 242c.2 2-1 4.600-2.600 6.300M1153.500 242c.2 2.300 1.600 4 3.200 4.800M1150.900 248.300c1.700-1 3.900-1.600 5.800-1.500" stroke="#6464f0" stroke-width=".9"/>
<path d="M1157.300 249.500h3v6h4.500l-6 6.300-6-6.300h4.500z" fill="#6464f0" stroke="#fff" stroke-width=".8"/>
<!-- 3 edit/organize -->
<rect x="1149.400" y="286.200" width="19.600" height="7.200" rx="1" fill="#f6d4ea" stroke="#d62f9c" stroke-width="1.900"/>
<rect x="1149.400" y="298.400" width="8" height="6.800" rx="1" fill="#f6d4ea" stroke="#d62f9c" stroke-width="1.900"/>
<path d="M1162 298.500h8M1162 302h8M1162 305.500h8" stroke="#d62f9c" stroke-width="1.100"/>
<!-- 4 request signatures -->
<path d="M1151.400 333.200h10.800l4.500 4.500v13.600h-15.300z" fill="#f5d6f5" stroke="#c22fc6" stroke-width="2"/>
<path d="M1154 337.500h6.500M1154 340.500h9.500M1154 343.300h9.500" stroke="#c22fc6" stroke-width="1"/>
<path d="M1154.300 345.500h2.400v2.800l-1.200 1.500-1.200-1.500z" fill="#c22fc6" stroke="none"/>
<path d="M1160.500 346l2.600 2.600M1163.100 346l-2.600 2.600" stroke="#c22fc6" stroke-width="1"/>
<!-- 5 fill & sign -->
<path d="M1149 396.500l2.800-6.600 11.200-10.700a2.500 2.500 0 0 1 3.800 3.300l-10.700 11.300z" fill="#e3d0f7" stroke="#a050e0" stroke-width="2"/>
<path d="M1147.500 397h8c1.500-2.700 3-4.300 3.800-3.600.8.800-.8 3.400.2 3.700 1 .3 2-3 3-2.700.9.300-.2 2.500.7 2.700.9.200 1.700-2 2.600-1.800.8.200.3 1.600 1.200 1.700.9.100 2-1.300 2.500-2.300" stroke="#a050e0" stroke-width="1.500" stroke-linecap="round"/>
<!-- 6 send for review -->
<path d="M1150.200 424.400h9.600l5 5v11.800h-14.600z" fill="#cfe6e6" stroke="#1a8f8f" stroke-width="2"/>
<path d="M1156.300 428c.2 2.400-1.200 5.700-3.200 7.800M1156.300 428c.2 2.800 2 4.900 4 5.900M1153.100 435.800c2-1.300 4.800-2 7.200-1.900" stroke="#1a8f8f" stroke-width="1"/>
<circle cx="1165.200" cy="439.700" r="5.700" fill="#1a8f8f" stroke="#fff" stroke-width="1"/>
<path d="M1162 439.700h5.500M1165.200 437l2.700 2.700-2.700 2.700" stroke="#fff" stroke-width="1.500"/>
<!-- 7 organize pages -->
<rect x="1161" y="470.900" width="8" height="18" rx="1.300" fill="#e2f4d8" stroke="#74c82e" stroke-width="2"/>
<path d="M1159 480.100h-9v8.800h9" stroke="#74c82e" stroke-width="2" stroke-dasharray="2.300 1.500" stroke-linejoin="miter"/>
<path d="M1150 470v7h7.200l-2.300-2.200 4.300-2.800v-2h-2.500l-3.700 3z" fill="#74c82e" stroke="none"/>
<!-- 8 send for comments -->
<path d="M1149.300 515.200h9.700l5 5v13.100h-14.700z" fill="#f5ecc0" stroke="#dbb412" stroke-width="2"/>
<path d="M1158.500 515.200v5.500h5.500" stroke="#dbb412" stroke-width="1.500"/>
<path d="M1159 525.500h11.300v9h-6.300l-3 4v-4h-2z" fill="#dbb412" stroke="#fff" stroke-width=".8"/>
<path d="M1162 528.500h6M1162 531h6" stroke="#fff" stroke-width="1.100"/>
<!-- 9 comment -->
<path d="M1150.700 562.100h17a1.500 1.500 0 0 1 1.500 1.500v12.100a1.500 1.500 0 0 1-1.500 1.500h-7.700l-5 5.600v-5.600h-4.300a1.500 1.500 0 0 1-1.500-1.500v-12.100a1.500 1.500 0 0 1 1.500-1.500z" fill="#dbb412" stroke="none"/>
<path d="M1153 567.800h12.500M1153 572h10" stroke="#fff" stroke-width="1.700"/>
<!-- 10 scan -->
<path d="M1153 616.500v-8.500h6.500l5.500 5.500v3" fill="#d8f0dc" stroke="#32aa46" stroke-width="2" stroke-linejoin="miter"/>
<path d="M1159.500 608v5.500h5.500" stroke="#32aa46" stroke-width="1.800" stroke-linejoin="miter"/>
<path d="M1148 616.300a1 1 0 0 1 1-1h1a1 1 0 0 1 1 1v1.800h16.100v-1.800a1 1 0 0 1 1-1h.8a1 1 0 0 1 1 1v6.600a1 1 0 0 1-1 1h-.8a1 1 0 0 1-1-1v-2h-16.100v2a1 1 0 0 1-1 1h-1a1 1 0 0 1-1-1z" fill="#32aa46" stroke="none"/>
<path d="M1153 622.400v6.800h13v-6.800" stroke="#32aa46" stroke-width="1.800" stroke-dasharray="1.600 1.400" stroke-linejoin="miter"/>
<path d="M1149.500 608.700l.6 1.200 1.200.6-1.200.6-.6 1.200-.6-1.200-1.200-.6 1.200-.6zM1164.500 605.500l.6 1.200 1.200.6-1.200.6-.6 1.200-.6-1.200-1.200-.6 1.200-.6zM1168.300 607.300l.9 1.800 1.800.9-1.800.9-.9 1.800-.9-1.800-1.800-.9 1.800-.9z" fill="#32aa46" stroke="none"/>
<!-- 11 protect -->
<path d="M1158.900 653.500l-8.200 3v6.800c0 5.400 3.300 9.300 8.200 11.500z" fill="#d6d6fa" stroke="none"/>
<path d="M1158.900 653.500l8.200 3v6.800c0 5.400-3.300 9.300-8.200 11.500-4.900-2.200-8.200-6.100-8.200-11.500v-6.800z" stroke="#6464f0" stroke-width="2"/>
<!-- 12 certificates -->
<path d="M1159.500 704.500l5.500 5.300 2.300-2.600-5.200-5.400z" fill="#cfe6e6" stroke="none"/>
<path d="M1148 719.300l2.200-8.800 8-5.700 6.400 6.300-4 5.700-9.800 3z" stroke="#1a8f8f" stroke-width="1.900"/>
<path d="M1149 718.500l5.600-5.600" stroke="#1a8f8f" stroke-width="1.200"/><circle cx="1155" cy="712.500" r="1.200" fill="#1a8f8f" stroke="none"/>
<path d="M1157.500 705.600l3.200-5M1164 711.500l3.500-2.800" stroke="#1a8f8f" stroke-width="1.800" stroke-linecap="round"/>
<path d="M1164.300 716v6.300l2-1.600 2 1.600v-6.300z" fill="#1a8f8f" stroke="none"/>
<circle cx="1166.300" cy="713.400" r="3" fill="#fff" stroke="#1a8f8f" stroke-width="1.700"/>
<!-- active: prepare form -->
<rect x="1136" y="733" width="45" height="37" fill="#c32fc8" stroke="none"/>
<path d="M1152.100 747.200h8.400l6.400 6.400v12.400h-14.800z" stroke="#fff" stroke-width="2"/>
<path d="M1160 747.200v6.800h6.800" stroke="#fff" stroke-width="1.800"/>
<rect x="1155.200" y="759.300" width="8.800" height="3.400" rx="1" stroke="#fff" stroke-width="1.700"/>
<path d="M1153.500 778.800l5.600 5.400 5.600-5.400" stroke="#555" stroke-width="2"/>

</svg>

</body>
</html>
